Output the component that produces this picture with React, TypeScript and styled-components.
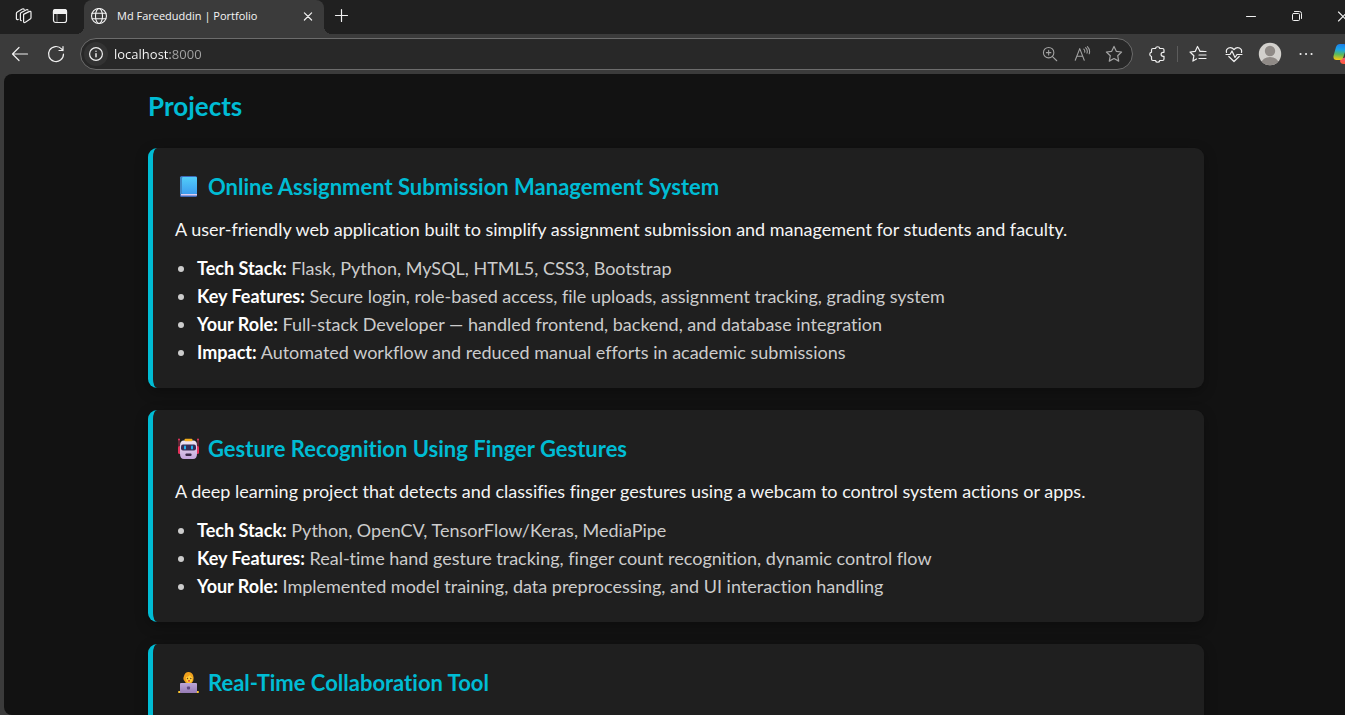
import React from "react";
import styled, { createGlobalStyle } from "styled-components";

const GlobalStyle = createGlobalStyle`
  * { box-sizing: border-box; }
  body {
    margin: 0;
    background: #3b3b3b;
    font-family: "Segoe UI", "Open Sans", "Noto Sans", sans-serif;
  }
`;

const Shell = styled.div`
  display: flex;
  flex-direction: column;
  height: 100vh;
  overflow: hidden;
`;

/* The window runs a little past the right edge of the screen. */
const Chrome = styled.header`
  flex: none;
  margin-right: -21px;
`;

const TabStrip = styled.div`
  display: flex;
  height: 34px;
  padding-left: 6px;
  background: #202020;
`;

const IconButton = styled.button<{ $w?: number; $color?: string }>`
  display: flex;
  align-items: center;
  justify-content: center;
  flex: none;
  width: ${(p) => p.$w ?? 36}px;
  height: 32px;
  padding: 0;
  border: 0;
  background: none;
  color: ${(p) => p.$color ?? "#f0f0f0"};
`;

const Tab = styled.div`
  position: relative;
  display: flex;
  align-items: center;
  width: 240px;
  height: 34px;
  margin-left: 6px;
  padding: 0 4px 2px 6px;
  border-radius: 8px 8px 0 0;
  background: #3b3b3b;
  color: #f5f5f5;

  &::before,
  &::after {
    content: "";
    position: absolute;
    bottom: 0;
    width: 8px;
    height: 8px;
  }
  &::before {
    left: -8px;
    background: radial-gradient(circle at 0 0, #202020 8px, #3b3b3b 8px);
  }
  &::after {
    right: -8px;
    background: radial-gradient(circle at 100% 0, #202020 8px, #3b3b3b 8px);
  }
`;

const TabTitle = styled.span`
  flex: 1;
  padding-left: 9px;
  font-size: 11px;
  line-height: 16px;
  white-space: nowrap;
`;

const WindowControls = styled.div`
  display: flex;
  margin-left: auto;
`;

const Toolbar = styled.div`
  display: flex;
  align-items: center;
  height: 40px;
  padding-left: 2px;
  background: #3b3b3b;
`;

const AddressBar = styled.div`
  display: flex;
  align-items: center;
  flex: 1;
  height: 32px;
  margin: 0 6px;
  padding: 0 2px 0 3px;
  border: 1px solid #6c6c6c;
  border-radius: 16px;
  background: #282828;
`;

const SiteInfo = styled(IconButton)`
  height: 24px;
  border-radius: 12px;
  background: #333333;
`;

const AddressInput = styled.input`
  flex: 1;
  min-width: 0;
  height: 24px;
  margin-left: 6px;
  padding: 0;
  border: 0;
  outline: 0;
  font: 13px/24px "Segoe UI", "Open Sans", "Noto Sans", sans-serif;
  color: transparent;
  background: linear-gradient(to right, #ffffff 56px, #a6a6a6 56px);
  background-clip: text;
  -webkit-background-clip: text;
`;

const Divider = styled.span`
  width: 1px;
  height: 16px;
  margin: 0 2px;
  background: #5c5c5c;
`;

const Page = styled.main`
  flex: 1;
  min-height: 0;
  margin: 0 -3px 0 4px;
  padding: 14px 24px 0;
  overflow: hidden;
  border-radius: 8px 0 0 8px;
  background: #121212;
  font-family: "Segoe UI", Lato, "Open Sans", sans-serif;
  font-variant-ligatures: none;
`;

const Section = styled.section`
  max-width: 1056px;
  margin: 0 auto;
`;

const SectionTitle = styled.h2`
  margin: 0 0 24px;
  font-size: 26px;
  line-height: 36px;
  font-weight: 700;
  color: #00bcd4;
`;

const Card = styled.article`
  margin-bottom: 22px;
  padding: 22px;
  border-left: 5px solid #00bcd4;
  border-radius: 9px;
  background: #1f1f1f;
  box-shadow: 0 4px 13px rgba(0, 0, 0, 0.3);
`;

const CardTitle = styled.h3`
  display: flex;
  align-items: center;
  gap: 6px;
  margin: 0 0 11px;
  font-size: 22px;
  line-height: 34px;
  font-weight: 700;
  color: #00bcd4;
`;

const Summary = styled.p`
  margin: 0 0 11px;
  font-size: 18px;
  line-height: 28px;
  color: #f5f5f5;
`;

const Facts = styled.ul`
  margin: 0;
  padding-left: 22px;
  font-size: 18px;
  line-height: 28px;
  color: #cccccc;
`;

const Label = styled.strong`
  font-weight: 700;
  color: #ffffff;
`;

const Line = ({ size = 20, w = 1.2, children }: { size?: number; w?: number; children: React.ReactNode }) => (
  <svg width={size} height={size} viewBox="0 0 20 20" fill="none" stroke="currentColor" strokeWidth={w} strokeLinecap="round" strokeLinejoin="round" aria-hidden="true">
    {children}
  </svg>
);

const STAR = "M10 2.4l2.3 4.9 5.3.7-3.9 3.7 1 5.4-4.7-2.6-4.7 2.6 1-5.4-3.9-3.7 5.3-.7z";

const WorkspacesIcon = () => (
  <Line>
    <path d="M9.6 8.4L15 5.6q2-.9 2 .9v5.2q0 .9-.8 1.4l-4.8 3.1q-1.8 1-1.8-.8z" />
    <path d="M7.3 14.6q-.9.2-.9-1V8q0-1 .9-1.5l5.2-2.8q1-.5 1.5.3" />
    <path d="M4.2 13.4q-1.8.6-1.8-.9V7.400q0-1 .9-1.500l5-2.800q1.300-.7 1.900.3" />
  </Line>
);

const TabActionsIcon = () => (
  <Line>
    <rect x="3.500" y="3.500" width="13" height="13" rx="2.200" />
    <path d="M3.500 7.500V5.500q0-2 2-2h9q2 0 2 2v2z" fill="currentColor" />
    <path d="M7 8v8" strokeWidth="0.8" opacity="0.6" />
  </Line>
);

const GlobeIcon = () => (
  <Line size={18} w={1.2}>
    <circle cx="10" cy="10" r="8.300" />
    <ellipse cx="10" cy="10" rx="3.900" ry="8.300" />
    <path d="M2.400 7h15.200M2.400 13h15.200" />
  </Line>
);

const CopilotIcon = () => (
  <svg width="26" height="24" viewBox="0 0 26 24" aria-hidden="true">
    <defs>
      <linearGradient id="cpLeft" x1="0.4" y1="0" x2="0.3" y2="1">
        <stop offset="0" stopColor="#1b7fe8" />
        <stop offset="0.35" stopColor="#1aa5e8" />
        <stop offset="0.65" stopColor="#5cb95a" />
        <stop offset="1" stopColor="#f9c910" />
      </linearGradient>
      <linearGradient id="cpRight" x1="0.7" y1="0" x2="0.3" y2="1">
        <stop offset="0" stopColor="#a45be0" />
        <stop offset="0.5" stopColor="#f0588a" />
        <stop offset="1" stopColor="#ff5a3d" />
      </linearGradient>
    </defs>
    <path d="M16 8h5q4 0 3.500 4l-2 6q-1 4-5 4h-6q-3 0-3.500-3l1-3h2.500q2 0 2.500-2z" fill="url(#cpRight)" />
    <path d="M8 2h7q3 0 3.500 3l.5 2h-3q-2 0-2.700 2l-2.100 6.500q-.7 2.500-3.200 2.500H4.500q-3.500 0-3-4L4 5q1-3 4-3z" fill="url(#cpLeft)" />
    <path d="M12.500 2H15q3 0 3.700 3l.6 2h-5z" fill="#1647a8" />
  </svg>
);

const BookEmoji = () => (
  <svg width="27" height="24" viewBox="0 0 27 24" aria-hidden="true">
    <defs>
      <linearGradient id="cover" x1="0" y1="0" x2="0" y2="1">
        <stop offset="0" stopColor="#52cdf8" />
        <stop offset="1" stopColor="#3d9ef0" />
      </linearGradient>
    </defs>
    <rect x="5" y="1" width="17" height="21" rx="1.500" fill="#3e68b8" />
    <rect x="7" y="2" width="15" height="17" rx="1" fill="url(#cover)" />
    <rect x="5" y="2" width="2" height="17" fill="#3f86c4" />
    <rect x="6" y="19" width="16" height="1.500" fill="#dccdf2" />
  </svg>
);

const RobotEmoji = () => (
  <svg width="27" height="24" viewBox="0 0 27 24" aria-hidden="true">
    <defs>
      <linearGradient id="face" x1="0" y1="0" x2="0" y2="1">
        <stop offset="0" stopColor="#f0e6f3" />
        <stop offset="1" stopColor="#c3a5dc" />
      </linearGradient>
    </defs>
    <path d="M4 2v12M23 2v12" stroke="#a92c4c" strokeWidth="1" />
    <circle cx="4" cy="2.500" r="1" fill="#e0355d" />
    <circle cx="23" cy="2.500" r="1" fill="#e0355d" />
    <rect x="3" y="9" width="3" height="8" rx="1.500" fill="#e6315b" />
    <rect x="21" y="9" width="3" height="8" rx="1.500" fill="#e6315b" />
    <path d="M9 3.500h9q4 0 4 5v8q0 5.500-4 5.500H9q-4 0-4-5.500v-8q0-5 4-5z" fill="url(#face)" />
    <rect x="9.500" y="1.800" width="8" height="2.400" rx="1" fill="#f2ae1c" />
    <rect x="6" y="7.500" width="15" height="6" rx="2" fill="#362c55" />
    <rect x="9" y="8.500" width="2" height="4" rx="1" fill="#22b4f4" />
    <rect x="16" y="8.500" width="2" height="4" rx="1" fill="#22b4f4" />
    <rect x="10.500" y="16.500" width="6" height="2.500" rx="0.8" fill="#3a2a49" />
  </svg>
);

const TechnologistEmoji = () => (
  <svg width="27" height="24" viewBox="0 0 27 24" aria-hidden="true">
    <defs>
      <linearGradient id="laptop" x1="0" y1="0" x2="0" y2="1">
        <stop offset="0" stopColor="#bda6d8" />
        <stop offset="1" stopColor="#957bb5" />
      </linearGradient>
    </defs>
    <path d="M9.500 10Q7.500 8 9 5q1-4 4.500-4t4.700 3.500q1 3 0 5.500l-2 2.500h-5z" fill="#f0a01c" />
    <path d="M11 6q2.500 0 4-2 1.200 2 2.500 2.500.2 5-3.700 5.500Q10.600 11.500 11 6z" fill="#ffce38" />
    <circle cx="12.500" cy="7.500" r="0.7" fill="#6b3b20" />
    <circle cx="15.800" cy="7.500" r="0.7" fill="#6b3b20" />
    <path d="M13 9.800h2" stroke="#d22f45" strokeWidth="1.200" fill="none" />
    <rect x="3" y="20" width="3" height="2" rx="1" fill="#ffc831" />
    <rect x="21" y="20" width="3" height="2" rx="1" fill="#ffc831" />
    <rect x="5" y="12" width="17" height="10" rx="1" fill="url(#laptop)" />
    <rect x="12" y="15.500" width="3" height="3" rx="0.8" fill="#5f477d" />
  </svg>
);

type Project = { title: string; icon: React.ReactNode; summary?: string; facts?: [string, string][] };

const projects: Project[] = [
  {
    title: "Online Assignment Submission Management System",
    icon: <BookEmoji />,
    summary: "A user-friendly web application built to simplify assignment submission and management for students and faculty.",
    facts: [
      ["Tech Stack:", "Flask, Python, MySQL, HTML5, CSS3, Bootstrap"],
      ["Key Features:", "Secure login, role-based access, file uploads, assignment tracking, grading system"],
      ["Your Role:", "Full-stack Developer — handled frontend, backend, and database integration"],
      ["Impact:", "Automated workflow and reduced manual efforts in academic submissions"],
    ],
  },
  {
    title: "Gesture Recognition Using Finger Gestures",
    icon: <RobotEmoji />,
    summary: "A deep learning project that detects and classifies finger gestures using a webcam to control system actions or apps.",
    facts: [
      ["Tech Stack:", "Python, OpenCV, TensorFlow/Keras, MediaPipe"],
      ["Key Features:", "Real-time hand gesture tracking, finger count recognition, dynamic control flow"],
      ["Your Role:", "Implemented model training, data preprocessing, and UI interaction handling"],
    ],
  },
  { title: "Real-Time Collaboration Tool", icon: <TechnologistEmoji /> },
];

const BrowserChrome = () => (
  <Chrome>
    <TabStrip>
      <IconButton aria-label="Workspaces"><WorkspacesIcon /></IconButton>
      <IconButton aria-label="Tab actions"><TabActionsIcon /></IconButton>
      <Tab>
        <GlobeIcon />
        <TabTitle>Md Fareeduddin | Portfolio</TabTitle>
        <IconButton $w={24} aria-label="Close tab">
          <Line size={16} w={1.5}><path d="M5.500 6l9 9M14.500 6l-9 9" /></Line>
        </IconButton>
      </Tab>
      <IconButton aria-label="New tab">
        <Line w={1.2}><path d="M9.500 3.500v12M3.500 9.500h12" /></Line>
      </IconButton>
      <WindowControls>
        <IconButton $w={46} aria-label="Minimize"><Line w={1}><path d="M5.500 10.500h9" /></Line></IconButton>
        <IconButton $w={46} aria-label="Restore">
          <Line w={1}><rect x="5.500" y="7.500" width="7" height="7" rx="1" /><path d="M7.500 5.500h5q2 0 2 2v5" /></Line>
        </IconButton>
        <IconButton $w={46} aria-label="Close"><Line w={1.1}><path d="M5.500 6l9 9M14.500 6l-9 9" /></Line></IconButton>
      </WindowControls>
    </TabStrip>
    <Toolbar>
      <IconButton aria-label="Back"><Line><path d="M17.500 10h-15M9 3.500L2.500 10 9 16.500" /></Line></IconButton>
      <IconButton aria-label="Reload">
        <Line><path d="M17.500 10A7.500 7.500 0 1 1 15.500 4.900L17 6.500M17 2.500v4h-4" /></Line>
      </IconButton>
      <AddressBar>
        <SiteInfo $w={24} aria-label="Site information">
          <Line size={16} w={1.5}><circle cx="10" cy="10" r="8" /><path d="M10 9.500v4M10 6.500v.2" strokeWidth="1.800" /></Line>
        </SiteInfo>
        <AddressInput aria-label="Address" defaultValue="localhost:8000" spellCheck={false} />
        <IconButton $w={32} $color="#a3a3a3" aria-label="Zoom">
          <Line size={18}><circle cx="8.500" cy="8.500" r="5.800" /><path d="M12.800 12.800l4.700 4.700M8.500 6v5M6 8.500h5" /></Line>
        </IconButton>
        <IconButton $w={32} $color="#a3a3a3" aria-label="Read aloud">
          <Line size={18}><path d="M2.500 17L7.500 4l5 13M4.200 12.500h6.600M12 4.500q1.500 1.300 1 3.500M14 3q2.800 2.500 1.500 6M16 1.800q3.500 3.500 2 8" /></Line>
        </IconButton>
        <IconButton $w={32} $color="#a3a3a3" aria-label="Add to favorites"><Line><path d={STAR} /></Line></IconButton>
      </AddressBar>
      <IconButton aria-label="Extensions">
        <Line><path d="M6 4.500h2.500a2.200 2.200 0 0 1 4.300 0h2.700q1.500 0 1.500 1.500v2.300h-.9a2 2 0 0 0 0 4h.9V15q0 1.500-1.500 1.500h-2.700a2.200 2.200 0 0 1-4.300 0H6q-1.500 0-1.500-1.500v-2.500a2.200 2.200 0 0 1 0-4.300V6Q4.500 4.500 6 4.500z" /></Line>
      </IconButton>
      <Divider />
      <IconButton aria-label="Favorites">
        <Line><path d="M16.500 7.500l-4.500-.3-2.500-4.700L7.300 7.300 2 8l3.900 3.700-1 5.400L8.500 15M12 7.500h6M11 11h7M11 14.500h7" /></Line>
      </IconButton>
      <IconButton aria-label="Browser essentials">
        <Line><path d="M2.500 8.500C1.500 4.500 6.500 1.500 10 5.500c3.500-4 8.500-1 7.500 3M4.800 12.500L10 17.500l5.200-5M2 10.500h4l2-3.500 3 6.500 2-3h5" /></Line>
      </IconButton>
      <IconButton aria-label="Profile">
        <svg width="24" height="24" viewBox="0 0 24 24" aria-hidden="true">
          <clipPath id="avatar"><circle cx="12" cy="12" r="11.200" /></clipPath>
          <g clipPath="url(#avatar)">
            <rect width="24" height="24" fill="#d2d0cc" />
            <circle cx="12" cy="9" r="5.200" fill="#8f8a86" />
            <ellipse cx="12" cy="21" rx="8.500" ry="6" fill="#8f8a86" />
          </g>
        </svg>
      </IconButton>
      <IconButton aria-label="Settings and more">
        <Line w={2}><path d="M4.500 10h.1M10 10h.1M15.500 10h.1" /></Line>
      </IconButton>
      <IconButton $w={42} aria-label="Copilot"><CopilotIcon /></IconButton>
    </Toolbar>
  </Chrome>
);

const ProjectCard = ({ title, icon, summary, facts }: Project) => (
  <Card>
    <CardTitle>{icon}{title}</CardTitle>
    {summary && <Summary>{summary}</Summary>}
    {facts && (
      <Facts>
        {facts.map(([label, text]) => (
          <li key={label}><Label>{label}</Label> {text}</li>
        ))}
      </Facts>
    )}
  </Card>
);

export default function App() {
  return (
    <Shell>
      <GlobalStyle />
      <BrowserChrome />
      <Page>
        <Section>
          <SectionTitle>Projects</SectionTitle>
          {projects.map((p) => <ProjectCard key={p.title} {...p} />)}
        </Section>
      </Page>
    </Shell>
  );
}
